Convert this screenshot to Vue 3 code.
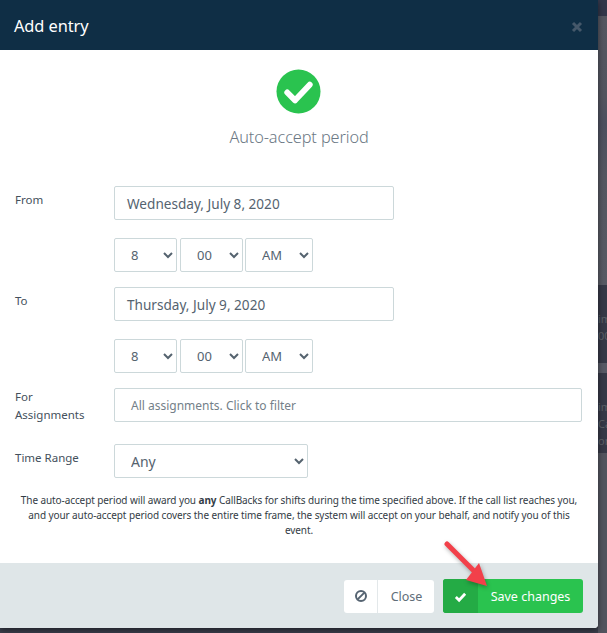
<script setup>
const timeRows = [
  { id: 'from', label: 'From', date: 'Wednesday, July 8, 2020' },
  { id: 'to', label: 'To', date: 'Thursday, July 9, 2020' }
]
const notes = ['im', '00']
const notes2 = ['im', 'Ca', 'or']
</script>

<template>
  <div class="page">
    <main class="modal">
      <header class="head">
        <h1>Add entry</h1>
        <svg class="x" viewBox="0 0 12 12"><path d="M2 2l8 8M10 2l-8 8" /></svg>
      </header>
      <section class="body">
        <div class="hero">
          <svg class="ok" viewBox="0 0 46 46">
            <circle cx="23" cy="23" r="22.5" fill="#2ac34f" />
            <path d="M11.5 24l8 8 15-16" fill="none" stroke="#fff" stroke-width="6" stroke-linejoin="round" stroke-linecap="round" />
          </svg>
          <h2>Auto-accept period</h2>
        </div>

        <div class="form">
          <template v-for="row in timeRows" :key="row.id">
            <div class="row">
              <label>{{ row.label }}</label>
              <div class="field">
                <div class="input date">{{ row.date }}</div>
                <div class="times">
                  <select class="t1"><option>8</option></select>
                  <select class="t1"><option>00</option></select>
                  <select class="t2"><option>AM</option></select>
                </div>
              </div>
            </div>
          </template>
          <div class="row assign">
            <label><span>For Assignments</span></label>
            <div class="input wide">All assignments. Click to filter</div>
          </div>
          <div class="row range">
            <label>Time Range</label>
            <select class="any"><option>Any</option></select>
          </div>
        </div>
        <p class="note">The auto-accept period will award you <b>any</b> CallBacks for shifts during the time specified above. If the call list reaches you, and your auto-accept period covers the entire time frame, the system will accept on your behalf, and notify you of this event.</p>
      </section>
      <footer class="foot">
        <button class="btn close">
          <span class="ic">
            <svg viewBox="0 0 14 14" width="14" height="14"><circle cx="7" cy="7" r="5" fill="none" stroke="#566472" stroke-width="2" /><path d="M3.6 10.4l6.8-6.8" stroke="#566472" stroke-width="2" /></svg>
          </span>
          <span class="tx">Close</span>
        </button>
        <button class="btn save">
          <span class="ic">
            <svg viewBox="0 0 14 14" width="13" height="13"><path d="M2 7.5l3.5 3.5L12 4" fill="none" stroke="#fff" stroke-width="3" /></svg>
          </span>
          <span class="tx">Save changes</span>
        </button>
        <svg class="arrow" viewBox="0 0 62 62">
          <path d="M5 5L33 33" stroke="#f2404a" stroke-width="5" stroke-linecap="round" />
          <path d="M24 41L37 24 45 47Z" fill="#f2404a" />
        </svg>
      </footer>
    </main>
    <aside class="side">
      <div class="s top"></div>
      <div class="s a"></div>
      <div class="s b"><span v-for="n in notes" :key="n">{{ n }}</span></div>
      <div class="s c"></div>
      <div class="s d"><span v-for="n in notes2" :key="n">{{ n }}</span></div>
      <div class="s e"></div>
    </aside>
  </div>
</template>

<style>
html, body { margin: 0; background: #3b3f4c; overflow: hidden; }
</style>

<style scoped>
.page {
  display: flex; width: 607px; height: 633px; overflow: hidden;
  font-family: "Noto Sans", "Open Sans", sans-serif; color: #44505c; background: #3b3f4c;
}
.modal {
  width: 598px; height: 628px; flex: none; display: flex; flex-direction: column;
  background: #fff; border-bottom-right-radius: 4px; box-shadow: 0 2px 6px rgba(0,0,0,.5); position: relative;
}
.head {
  height: 50px; flex: none; background: #0f2e45; display: flex; align-items: center;
  justify-content: space-between; padding: 0 15px 0 14px; box-sizing: border-box;
}
.head h1 { margin: 0; font-size: 16.4px; font-weight: 400; color: #fff; letter-spacing: -.1px; }
.x { width: 12px; height: 12px; margin-top: 3px; }
.x path { stroke: #45586a; stroke-width: 3; fill: none; }
.body { flex: 1; display: flex; flex-direction: column; min-height: 0; }
.hero { display: flex; flex-direction: column; align-items: center; padding-top: 19px; height: 117px; box-sizing: border-box; }
.ok { width: 45px; height: 45px; margin-right: 1px; }
.hero h2 { margin: 12px 0 0; font-size: 16.3px; font-weight: 300; color: #6b7884; letter-spacing: -.1px; }
.form { display: flex; flex-direction: column; padding: 19px 16px 0 15px; }
.row { display: flex; }
.row label { width: 99px; flex: none; font-size: 11.5px; line-height: 18px; color: #44505c; padding-top: 5px; box-sizing: content-box; }
.field { display: flex; flex-direction: column; gap: 18px; margin-bottom: 15px; }
.input {
  box-sizing: border-box; height: 34px; border: 1px solid #ccd8da; border-radius: 2px;
  display: flex; align-items: center; font-size: 13.6px; color: #55636f;
}
.date { width: 280px; padding: 1px 0 0 12px; }
.times { display: flex; gap: 3px; }
select {
  box-sizing: border-box; height: 34px; border: 1px solid #ccd8da; border-radius: 2px;
  background: #fff; font-family: inherit; font-size: 13px; color: #55636f; outline: none;
}
.t1 { width: 63px; padding-left: 12px; }
.t2 { width: 68px; padding-left: 12px; margin-left: -1px; }
.assign label { padding-top: 0; }
.assign label span { display: block; width: 75px; }
.wide { flex: 1; padding-left: 16px; font-size: 12px; color: #747f89; }
.range { margin-top: 20px; }
.range label { padding-top: 5px; }
.any { width: 194px; padding-left: 12px; font-size: 14px; }
.note {
  margin: 15px 15px 0 15px; text-align: center; font-size: 10px; line-height: 15px; color: #333c45; letter-spacing: -.09px;
}
.note b { font-weight: 700; }
.foot {
  height: 65px; flex: none; background: #dfe6e8; display: flex; justify-content: flex-end;
  align-items: center; gap: 9px; padding-right: 15px; position: relative; border-bottom-right-radius: 4px; box-sizing: border-box;
}
.btn {
  display: flex; align-items: stretch; padding: 0; border: 0; border-radius: 3px; overflow: hidden;
  font-family: inherit; font-size: 12.5px; height: 33px; margin-top: 1px;
}
.ic { display: flex; align-items: center; justify-content: center; }
.tx { display: flex; align-items: center; }
.close { background: #fff; color: #606d79; width: 90px; }
.close .ic { width: 33px; border-right: 1px solid #e3e8ea; }
.close .tx { flex: 1; justify-content: center; padding-left: 1px; }
.save { background: #2ac34f; color: #fff; width: 140px; height: 34px; }
.save .ic { width: 35px; background: #24ab45; }
.save .tx { flex: 1; justify-content: center; }
.arrow { position: absolute; left: 442px; top: -24px; width: 62px; height: 62px; overflow: visible; filter: drop-shadow(1px 2px 2px rgba(0,0,0,.3)); }
.side { flex: 1; display: flex; flex-direction: column; font-size: 11px; color: #5c6068; overflow: hidden; }
.s { flex: none; display: flex; flex-direction: column; line-height: 17px; white-space: nowrap; }
.top { height: 16px; background: #33374a; }
.a { height: 269px; background: linear-gradient(#555761, #53555f 30%, #4d505f 40%, #555761 60%, #585a64); }
.b { height: 78px; background: #363947; padding-top: 25px; box-sizing: border-box; }
.c { height: 10px; background: #575965; }
.d { height: 80px; background: #363947; padding-top: 25px; box-sizing: border-box; }
.e { flex: 1; background: #52545e; }
</style>
